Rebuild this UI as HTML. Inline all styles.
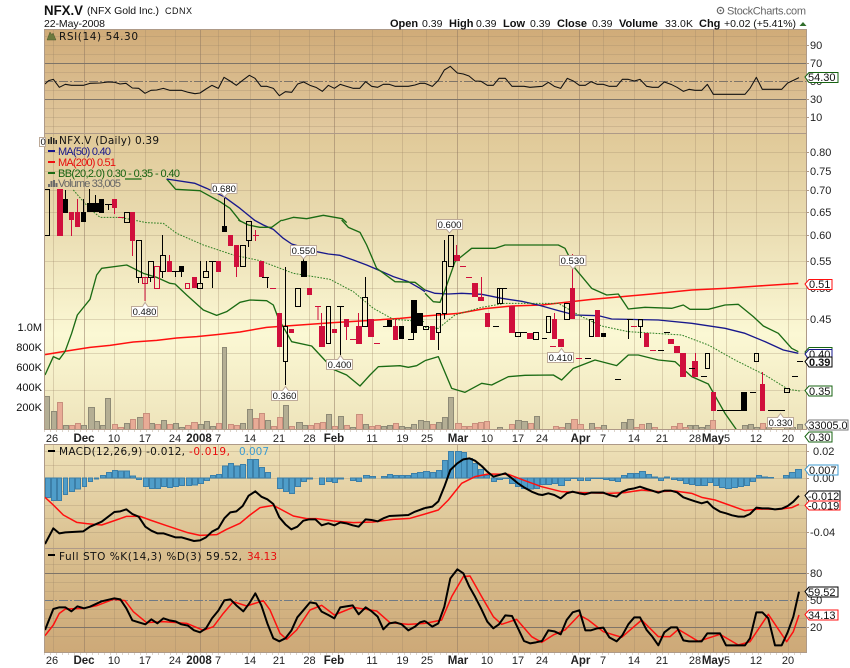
<!DOCTYPE html>
<html><head><meta charset="utf-8"><title>NFX.V</title>
<style>
html,body{margin:0;padding:0;background:#fff;width:850px;height:668px;overflow:hidden}
svg{display:block}
text{font-family:"Liberation Sans",Arial,sans-serif;font-size:11px;fill:#111}
.b{font-weight:bold}
.l{font-family:"DejaVu Sans","Liberation Sans",sans-serif;font-size:10.5px}
.m{font-family:"Liberation Sans",Arial,sans-serif;font-size:11px}
.a{font-size:11px;fill:#222}
.d{font-size:11px;text-anchor:middle;fill:#222}
.db{font-size:11.5px;font-weight:bold;text-anchor:middle;fill:#222}
.p{font-size:9.5px;text-anchor:middle;fill:#111}
.tag{fill:#fff;stroke-width:1}
.box{fill:#fff;stroke:#bdaa99}
.z{fill:none;stroke-linejoin:round}
polyline[stroke="#1b6b14"]{stroke-width:4}
polyline[stroke="#18188c"]{stroke-width:4}
polyline[stroke="#ff1010"]{stroke-width:4.5}
</style></head>
<body>
<svg width="850" height="668" viewBox="0 0 850 668" xmlns="http://www.w3.org/2000/svg">
<defs>
<linearGradient id="g1" x1="0" y1="29" x2="0" y2="133" gradientUnits="userSpaceOnUse"><stop offset="0" stop-color="#d0ab78"/><stop offset="1" stop-color="#e2caa0"/></linearGradient>
<linearGradient id="g2" x1="0" y1="133" x2="0" y2="429" gradientUnits="userSpaceOnUse"><stop offset="0" stop-color="#e0c998"/><stop offset=".3" stop-color="#e9dbb0"/><stop offset=".68" stop-color="#fbf8d4"/><stop offset="1" stop-color="#eee4bb"/></linearGradient>
<linearGradient id="g3" x1="0" y1="444" x2="0" y2="548" gradientUnits="userSpaceOnUse"><stop offset="0" stop-color="#eee1b8"/><stop offset="1" stop-color="#d9bf8f"/></linearGradient>
<linearGradient id="g4" x1="0" y1="548" x2="0" y2="652" gradientUnits="userSpaceOnUse"><stop offset="0" stop-color="#d9bf8f"/><stop offset="1" stop-color="#cda978"/></linearGradient>
<clipPath id="c1"><rect x="44" y="29" width="762" height="104"/></clipPath>
<clipPath id="c2"><rect x="44" y="134" width="762" height="295"/></clipPath>
<clipPath id="c3"><rect x="44" y="444" width="762" height="104"/></clipPath>
<clipPath id="c4"><rect x="44" y="548" width="762" height="104"/></clipPath>
</defs>

<!-- panels -->
<rect x="44" y="29" width="762" height="104" fill="url(#g1)"/>
<rect x="44" y="133" width="762" height="296" fill="url(#g2)"/>
<rect x="44" y="444" width="762" height="104" fill="url(#g3)"/>
<rect x="44" y="548" width="762" height="104" fill="url(#g4)"/>

<!-- horizontal grid -->
<path shape-rendering="crispEdges" stroke="#9a8468" stroke-opacity=".28" fill="none" d="M44 36.5H806M44 45.5H806M44 54.5H806M44 72.5H806M44 90.5H806M44 108.5H806M44 117.5H806M44 126.5H806M44 152.5H806M44 171.5H806M44 190.5H806M44 212.5H806M44 235.5H806M44 261.5H806M44 288.5H806M44 319.5H806M44 353.5H806M44 390.5H806M44 451.5H806M44 465.5H806M44 478.5H806M44 491.5H806M44 505.5H806M44 518.5H806M44 532.5H806M44 564.5H806M44 582.5H806M44 591.5H806M44 609.5H806M44 618.5H806M44 636.5H806"/>
<!-- vertical minor -->
<path shape-rendering="crispEdges" stroke="#9a8468" stroke-opacity=".3" fill="none" d="M53.5 29V133M114.5 29V133M145.5 29V133M175.5 29V133M218.5 29V133M250.5 29V133M279.5 29V133M309.5 29V133M372.5 29V133M402.5 29V133M426.5 29V133M488.5 29V133M518.5 29V133M542.5 29V133M603.5 29V133M634.5 29V133M662.5 29V133M695.5 29V133M726.5 29V133M756.5 29V133M788.5 29V133
M53.5 134V429M114.5 134V429M145.5 134V429M175.5 134V429M218.5 134V429M250.5 134V429M279.5 134V429M309.5 134V429M372.5 134V429M402.5 134V429M426.5 134V429M488.5 134V429M518.5 134V429M542.5 134V429M603.5 134V429M634.5 134V429M662.5 134V429M695.5 134V429M726.5 134V429M756.5 134V429M788.5 134V429
M53.5 444V652M114.5 444V652M145.5 444V652M175.5 444V652M218.5 444V652M250.5 444V652M279.5 444V652M309.5 444V652M372.5 444V652M402.5 444V652M426.5 444V652M488.5 444V652M518.5 444V652M542.5 444V652M603.5 444V652M634.5 444V652M662.5 444V652M695.5 444V652M726.5 444V652M756.5 444V652M788.5 444V652"/>
<!-- vertical major -->
<path shape-rendering="crispEdges" stroke="#8d7560" stroke-opacity=".5" fill="none" d="M84.5 29V429M200.5 29V429M334.5 29V429M457.5 29V429M579.5 29V429M713.5 29V429M84.5 444V652M200.5 444V652M334.5 444V652M457.5 444V652M579.5 444V652M713.5 444V652"/>

<!-- RSI -->
<g clip-path="url(#c1)">
<path shape-rendering="crispEdges" stroke="#7e7468" fill="none" d="M44 63.5H806M44 99.5H806"/>
<path shape-rendering="crispEdges" stroke="#7e7468" stroke-dasharray="9 2 2 2" fill="none" d="M44 81.5H806"/>
<g transform="scale(.33333)"><polyline class="z" stroke="#111" stroke-width="3.2" points="135,252 146,242 160,238 178,262 196,253 214,256 250,256 270,250 300,249 325,246 345,247 360,252 378,250 397,264 416,265 435,280 453,271 470,270 490,265 510,271 545,271 565,277 585,281 600,279 618,267 636,256 655,265 672,232 690,243 709,256 728,241 748,226 765,235 783,259 801,259 820,265 838,287 856,275 875,277 893,252 911,246 930,256 948,262 967,274 985,256 1003,265 1021,253 1040,259 1060,265 1079,265 1097,245 1115,259 1133,262 1150,253 1168,253 1186,259 1225,259 1245,255 1260,250 1275,250"/></g>
<g transform="translate(425 0) scale(.33333)"><polyline class="z" stroke="#111" stroke-width="3.2" points="0,250 22,259 40,241 58,210 76,199 97,219 115,222 132,228 150,243 168,244 187,256 205,256 222,235 241,235 261,259 297,259 315,262 352,259 370,247 388,259 407,265 427,235 445,243 463,256 481,256 498,245 517,253 535,253 553,259 575,259 592,238 610,238 628,243 645,238 665,259 682,262 700,262 718,246 738,253 756,262 775,274 792,268 810,271 830,271 847,253 865,283 960,283 975,265 994,232 1012,268 1070,268 1088,249 1105,241 1122,233"/></g>
</g>

<!-- main -->
<g clip-path="url(#c2)">
<!-- volume -->
<g shape-rendering="crispEdges" stroke="#8e8a76" fill="#b4ae94">
<path d="M44.5 396.5h5v33h-5zM51.5 411.5h5v18h-5zM63.5 425.5h5v4h-5zM81.5 425.5h5v4h-5zM88.5 407.5h6v22h-6zM94.5 421.5h5v8h-5zM100.5 425.5h5v4h-5zM105.5 398.5h5v31h-5zM124.5 423.5h5v6h-5zM137.5 417.5h6v12h-6zM149.5 423.5h5v6h-5zM161.5 420.5h5v9h-5zM173.5 423.5h5v6h-5zM179.5 427.5h5v2h-5zM198.5 424.5h5v5h-5zM204.5 421.5h5v8h-5zM210.5 426.5h5v3h-5zM222.5 347.5h4v82h-4zM240.5 423.5h5v6h-5zM247.5 409.5h5v20h-5zM265.5 420.5h5v9h-5zM283.5 405.5h5v24h-5zM296.5 422.5h6v7h-6zM302.5 425.5h5v4h-5zM326.5 414.5h5v15h-5zM338.5 416.5h5v13h-5zM350.5 427.5h5v2h-5zM363.5 424.5h5v5h-5zM381.5 426.5h5v3h-5zM387.5 425.5h5v4h-5zM399.5 426.5h5v3h-5zM405.5 427.5h5v2h-5zM411.5 424.5h5v5h-5zM418.5 420.5h5v9h-5zM423.5 421.5h6v8h-6zM436.5 422.5h5v7h-5zM442.5 417.5h5v12h-5zM448.5 397.5h5v32h-5zM497.5 427.5h5v2h-5zM515.5 420.5h6v9h-6zM521.5 421.5h6v8h-6zM534.5 416.5h5v13h-5zM565.5 423.5h5v6h-5zM589.5 423.5h5v6h-5zM601.5 425.5h5v4h-5zM621.5 422.5h5v7h-5zM627.5 419.5h6v10h-6zM646.5 423.5h5v6h-5zM687.5 425.5h5v4h-5zM693.5 425.5h5v4h-5zM699.5 427.5h5v2h-5zM705.5 425.5h5v4h-5zM742.5 425.5h5v4h-5zM748.5 424.5h5v5h-5zM754.5 427.5h5v2h-5zM766.5 427.5h5v2h-5zM784.5 425.5h5v4h-5zM790.5 427.5h5v2h-5zM797.5 424.5h5v5h-5z"/>
</g>
<g shape-rendering="crispEdges" stroke="#c88f7d" fill="#e8ab96">
<path d="M57.5 402.5h5v27h-5zM69.5 425.5h5v4h-5zM75.5 423.5h5v6h-5zM112.5 424.5h5v5h-5zM118.5 427.5h5v2h-5zM130.5 419.5h5v10h-5zM143.5 413.5h6v16h-6zM155.5 424.5h5v5h-5zM167.5 424.5h5v5h-5zM185.5 425.5h5v4h-5zM191.5 422.5h6v7h-6zM216.5 423.5h5v6h-5zM228.5 424.5h5v5h-5zM234.5 425.5h5v4h-5zM253.5 418.5h5v11h-5zM259.5 413.5h5v16h-5zM271.5 426.5h5v3h-5zM277.5 417.5h5v12h-5zM289.5 426.5h5v3h-5zM308.5 425.5h5v4h-5zM314.5 423.5h5v6h-5zM320.5 422.5h5v7h-5zM332.5 426.5h5v3h-5zM344.5 425.5h5v4h-5zM356.5 414.5h6v15h-6zM369.5 426.5h5v3h-5zM375.5 425.5h5v4h-5zM393.5 423.5h5v6h-5zM430.5 424.5h5v5h-5zM455.5 423.5h6v6h-6zM461.5 426.5h5v3h-5zM467.5 426.5h5v3h-5zM472.5 423.5h5v6h-5zM478.5 422.5h5v7h-5zM484.5 421.5h5v8h-5zM509.5 424.5h5v5h-5zM528.5 423.5h5v6h-5zM553.5 426.5h5v3h-5zM559.5 427.5h5v2h-5zM571.5 419.5h6v10h-6zM577.5 424.5h6v5h-6zM595.5 427.5h5v2h-5zM634.5 427.5h5v2h-5zM639.5 424.5h5v5h-5zM652.5 427.5h5v2h-5zM671.5 426.5h5v3h-5zM677.5 423.5h5v6h-5zM683.5 427.5h5v2h-5zM710.5 420.5h5v9h-5zM760.5 423.5h5v6h-5z"/>
</g>
<!-- bands & MA -->
<g transform="scale(.33333)">
<polyline class="z" stroke="#1b6b14" stroke-width="3.4" points="375,537 425,537"/>
<polyline class="z" stroke="#1b6b14" stroke-width="3.4" points="500,537 527,568 600,572 660,605 690,625 722,665"/>
<polyline class="z" stroke="#18188c" stroke-width="3.4" points="500,537 585,550 620,565 672,590 720,625 765,662"/>
<polyline class="z" stroke="#1b6b14" stroke-width="3.4" points="845,662 880,652 920,656 970,646 1027,656 1040,668"/>
<polyline class="z" stroke="#2d7f22" stroke-width="3" stroke-dasharray="5 4" points="220,570 268,625 300,652 360,652 400,660"/>
</g>
<g transform="translate(0 220) scale(.33333)">
<polyline class="z" stroke="#ff1010" stroke-width="4" points="135,404 200,393 270,382 330,376 400,366 470,361 530,354 590,350 650,344 720,336 800,322 900,315 1000,308 1100,302 1200,295 1275,288"/>
<polyline class="z" stroke="#18188c" stroke-width="3.4" points="762,0 790,15 820,28 850,55 875,72 920,85 950,95 985,102 1020,106 1060,120 1100,135 1135,150 1180,170 1225,185 1260,205 1275,215"/>
<polyline class="z" stroke="#2d7f22" stroke-width="3" stroke-dasharray="5 4" points="400,0 440,8 490,10 530,40 610,75 700,105 780,122 880,160 990,178 1060,215 1120,265 1180,298 1275,305"/>
<polyline class="z" stroke="#1b6b14" stroke-width="3.4" points="715,0 745,15 780,22 815,22 845,0"/>
<polyline class="z" stroke="#1b6b14" stroke-width="3.4" points="1025,0 1045,22 1080,37 1100,75 1130,145 1185,185 1245,187 1275,210"/>
<polyline class="z" stroke="#1b6b14" stroke-width="3.4" points="135,465 160,410 178,418 195,395 215,340 232,285 270,238 290,165 305,145 380,135 430,160 470,172 510,190 525,192 560,225 610,270 650,286 680,275 720,247 750,240 800,242 820,255 835,295 875,365 935,378 960,405 1000,448 1040,465 1080,498 1110,465 1135,440 1200,437 1225,442 1250,437 1275,422"/>
</g>
<g transform="translate(425 220) scale(.33333)">
<polyline class="z" stroke="#ff1010" stroke-width="4" points="0,288 100,280 180,266 260,258 350,255 440,245 500,238 580,231 680,222 800,210 900,205 1000,198 1120,190"/>
<polyline class="z" stroke="#18188c" stroke-width="3.4" points="0,210 30,220 70,222 110,220 170,223 230,235 290,244 340,255 400,272 450,285 520,287 560,297 700,300 800,310 900,325 960,340 1020,365 1075,390 1120,400"/>
<polyline class="z" stroke="#2d7f22" stroke-width="3" stroke-dasharray="5 4" points="0,322 40,325 90,285 170,262 240,250 400,250 470,290 530,318 610,335 770,345 850,375 930,420 1020,465 1090,508 1125,513"/>
<polyline class="z" stroke="#1b6b14" stroke-width="3.4" points="0,220 25,245 45,247 60,210 90,125 140,85 210,85 240,75 400,75 420,85 450,145 500,205 545,225 580,222 610,267 660,262 740,265 775,255 795,268 850,268 900,255 940,253 985,290 1015,318 1060,340 1100,385 1120,395"/>
<polyline class="z" stroke="#1b6b14" stroke-width="3.4" points="0,422 40,410 80,505 120,517 170,490 200,495 250,470 300,466 385,465 410,480 445,445 510,420 575,437 610,405 640,405 700,420 750,425 800,470 850,492 900,580 935,630"/>
</g>
<!-- red candles -->
<g shape-rendering="crispEdges">
<path fill="none" stroke="#d00f3c" d="M59.5 189V236M71.5 212V236M77.5 199V212M114.5 208V214M118 217.5h6M132.5 240V256M145 277V301M169.5 255V262M236.5 266V277M253 235.5h6M255.5 230V241M291 330V332M315 306.5h6M318 306.5V320M321.5 313V326M346.5 326V340M350 339.5h6M358.5 313V326M374 343.5h6M395.5 319V326M456.5 245V255M460 266.5h6M466 277.5h6M481.5 277V298M554.5 313V319M572.5 254V288M576 358.5h6M550 346.5h6M631 326.5h6M650 350.5h6M695.5 353V361M762.5 372V384M270 288.5h6"/>
<path fill="#d00f3c" d="M57 189h6v47h-6zM69 212h5v8h-5zM75 212h5v15h-5zM112 199h5v9h-5zM130 212h5v29h-5zM167 261h5v11h-5zM192 277h5v11h-5zM216 261h5v11h-5zM228 235h5v11h-5zM234 245h5v22h-5zM259 261h5v16h-5zM277 313h5v34h-5zM289 329h5v4h-5zM307 288h5v7h-5zM319 326h6v21h-6zM332 329h5v4h-5zM344 319h5v8h-5zM356 326h6v18h-6zM368 319h6v18h-6zM393 326h5v14h-5zM430 326h5v14h-5zM454 255h6v6h-6zM472 283h6v14h-6zM478 297h6v4h-6zM485 313h5v14h-5zM509 306h6v27h-6zM527 333h6v6h-6zM552 319h5v20h-5zM558 339h6v8h-6zM570 288h5v31h-5zM595 310h5v27h-5zM644 333h5v14h-5zM668 339h6v5h-6zM674 346h6v7h-6zM680 353h6v24h-6zM692 361h6v16h-6zM711 392h5v19h-5zM760 384h5v27h-5z"/>
<path fill="none" stroke="#d00f3c" d="M142.5 277.5h5v6h-5zM154.5 266.5h5v22h-5zM185.5 283.5h4v5h-4z"/>
<!-- black wicks and bodies -->
<path fill="none" stroke="#000" d="M49.5 189V236M46 189.5h3M65.5 190V199M83.5 199V212M89.5 189V203M95.5 195V204M108.5 204V210M105 204.5h7M138.5 277V283M150.5 277V282M162.5 235V255M162.5 271V278M175.5 272V277M172 271.5h7M181.5 271V277M200.5 261V283M206.5 261V272M212.5 261V288M209 261.5h7M224.5 198V226M248.5 240V247M267.5 277V288M262 277.5h7M285.5 267V327M285.5 361V385M303.5 255V261M340.5 306V355M337 306.5h7M365.5 277V297M383 326.5h6M389.5 326V320M408 339.5h6M413.5 333V340M438.5 332V350M444.5 240V261M444.5 313V319M493 326.5h6M499.5 303V288M503 288.5h4M521 332.5h6M542 338.5h5M585 358.5h6M615 379.5h6M628.5 319V339M640.5 326V338M627 319.5h6M658 350.5h6M664 332.5h6M689 368.5h6M701 376.5h6M717 410.5h24M750 392.5h6M768 410.5h17M792 376.5h6M797 361.5h6"/>
<path fill="#000" d="M63 199h5v14h-5zM81 212h5v10h-5zM87 203h6v9h-6zM93 203h6v9h-6zM99 199h5v14h-5zM179 266h5v6h-5zM222 226h5v6h-5zM301 261h6v16h-6zM387 320h5v7h-5zM399 326h5v13h-5zM411 300h6v33h-6zM417 313h6v13h-6zM601 333h5v4h-5zM741 392h6v19h-6z"/>
<!-- hollow -->
<path fill="none" stroke="#000" d="M44.5 189.5h5v46h-5zM124.5 212.5h5v10h-5zM136.5 240.5h5v37h-5zM148.5 261.5h5v16h-5zM160.5 255.5h5v16h-5zM197.5 283.5h5v5h-5zM203.5 271.5h5v6h-5zM240.5 245.5h5v21h-5zM246.5 221.5h5v19h-5zM283.5 326.5h4v35h-4zM295.5 288.5h5v18h-5zM326.5 306.5h4v37h-4zM362.5 297.5h5v29h-5zM423.5 326.5h5v3h-5zM436.5 313.5h4v19h-4zM442.5 261.5h4v52h-4zM448.5 235.5h5v31h-5zM497.5 288.5h5v15h-5zM515.5 332.5h5v4h-5zM533.5 332.5h5v7h-5zM546.5 316.5h4v16h-4zM564.5 303.5h5v16h-5zM589.5 319.5h4v17h-4zM638.5 319.5h4v7h-4zM705.5 353.5h4v15h-4zM754.5 353.5h4v8h-4zM784.5 388.5h5v4h-5z"/>
</g>
</g>

<!-- MACD -->
<g clip-path="url(#c3)">
<g shape-rendering="crispEdges" fill="#4f9dc9" stroke="#3c7fa8">
<path d="M45.5 478h5v19.5h-5zM51.5 478h5v22.5h-5zM57.5 478h4v22.5h-4zM63.5 478h4v16.5h-4zM69.5 478h5v13.5h-5zM75.5 478h5v11h-5zM82.5 478h4v8.5h-4zM88.5 478h4v3.5h-4zM94.5 478h4v1h-4zM100.5 475.5h5v2.5h-5zM106.5 472.5h5v5.5h-5zM112.5 470.5h5v7.5h-5zM118.5 471h5v7h-5zM124.5 471h5v7h-5zM130.5 476h5v2h-5zM136.5 478h5v1.5h-5zM143.5 478h5v8.5h-5zM149.5 478h5v10.5h-5zM155.5 478h5v10.5h-5zM161.5 478h5v8.5h-5zM167.5 478h5v9.5h-5zM173.5 478h5v8.5h-5zM179.5 478h5v7.5h-5zM186.5 478h5v7.5h-5zM192.5 478h5v7h-5zM198.5 478h5v5.5h-5zM204.5 478h5v2.5h-5zM210.5 475.5h5v2.5h-5zM216.5 474.5h5v3.5h-5zM222.5 466h5v12h-5zM228.5 463.5h5v14.5h-5zM234.5 466h5v12h-5zM240.5 464.5h5v13.5h-5zM247.5 459.5h5v18.5h-5zM253.5 459.5h5v18.5h-5zM259.5 467.5h5v10.5h-5zM265.5 472.5h5v5.5h-5zM277.5 478h5v10.5h-5zM283.5 478h5v13.5h-5zM289.5 478h5v15.5h-5zM295.5 478h5v8.5h-5zM301.5 478h5v3.5h-5zM307.5 478h5v1h-5zM319.5 478h5v6.5h-5zM326.5 478h5v3.5h-5zM332.5 478h5v4.5h-5zM338.5 478h5v1h-5zM350.5 478h5v2.5h-5zM356.5 478h5v3.5h-5zM363.5 475.5h6v2.5h-6zM369.5 476.5h6v1.5h-6zM381.5 476.5h5v1.5h-5zM387.5 474.5h5v3.5h-5zM393.5 475.5h5v2.5h-5zM399.5 475.5h5v2.5h-5zM405.5 475.5h5v2.5h-5zM411.5 473.5h6v4.5h-6zM417.5 472.5h6v5.5h-6zM423.5 471.5h6v6.5h-6zM430.5 472.5h5v5.5h-5zM436.5 470.5h5v7.5h-5zM442.5 460.5h5v17.5h-5zM448.5 451.5h5v26.5h-5zM455.5 451.5h6v26.5h-6zM461.5 452.5h5v25.5h-5zM467.5 458.5h5v19.5h-5zM472.5 463.5h5v14.5h-5zM478.5 469.5h5v8.5h-5zM484.5 475.5h5v2.5h-5zM491.5 478h5v3.5h-5zM497.5 478h5v1.5h-5zM503.5 478h5v.5h-5zM509.5 478h6v5.5h-6zM515.5 478h6v8.5h-6zM521.5 478h6v10.5h-6zM527.5 478h6v11h-6zM534.5 478h5v10.5h-5zM540.5 478h5v6.5h-5zM546.5 478h5v6.5h-5zM552.5 478h5v5.5h-5zM558.5 478h6v7.5h-6zM564.5 478h6v2.5h-6zM571.5 478h5v.5h-5zM577.5 478h6v2.5h-6zM585.5 478h5v2.5h-5zM591.5 478h5v.5h-5zM597.5 478h5v.5h-5zM603.5 478h5v1.5h-5zM609.5 478h5v2.5h-5zM615.5 478h5v3.5h-5zM621.5 475.5h5v2.5h-5zM627.5 473.5h6v4.5h-6zM634.5 473.5h5v4.5h-5zM639.5 471.5h6v6.5h-6zM646.5 474.5h5v3.5h-5zM652.5 477h5v1h-5zM658.5 478h5v2.5h-5zM664.5 477h5v1h-5zM671.5 478h5v1.5h-5zM677.5 478h5v2.5h-5zM683.5 478h5v5.5h-5zM689.5 478h5v6.5h-5zM695.5 478h5v7.5h-5zM701.5 478h6v7.5h-6zM707.5 478h5v4.5h-5zM713.5 478h5v7.5h-5zM719.5 478h6v9.5h-6zM725.5 478h6v10.5h-6zM731.5 478h6v9.5h-6zM738.5 478h5v8.5h-5zM744.5 478h5v7.5h-5zM750.5 478h5v3.5h-5zM756.5 475.5h5v2.5h-5zM762.5 477h5v1h-5zM768.5 477.5h5v.5h-5zM783.5 475.5h5v2.5h-5zM789.5 472.5h6v5.5h-6zM795.5 469.5h6v8.5h-6z"/>
</g>
<g transform="translate(0 440) scale(.33333)">
<polyline class="z" stroke="#ff1010" stroke-width="4" points="135,172 160,195 190,225 230,247 260,251 305,255 340,243 380,229 420,229 450,240 500,257 560,277 600,286 650,284 680,268 720,250 750,225 780,203 820,196 880,228 920,236 950,236 1000,243 1060,248 1120,246 1180,238 1230,235 1275,222"/>
<polyline class="z" stroke="#000" stroke-width="6" points="135,312 160,265 178,280 196,277 250,274 270,260 305,245 343,216 361,214 379,208 397,222 416,230 436,260 454,272 472,280 490,280 526,292 544,292 582,303 600,301 618,292 636,275 655,265 673,235 691,217 709,214 728,198 746,167 766,154 784,170 802,178 820,192 838,232 856,253 874,268 892,260 910,242 928,238 946,238 965,256 985,250 1003,256 1021,247 1039,250 1058,256 1076,260 1097,238 1115,240 1133,244 1150,235 1168,228 1205,226 1225,225 1245,215 1275,204"/>
</g>
<g transform="translate(425 440) scale(.33333)">
<polyline class="z" stroke="#ff1010" stroke-width="4" points="0,222 40,210 70,180 110,130 150,110 190,102 250,103 300,122 350,140 410,155 470,158 550,160 600,158 650,150 700,155 750,153 800,160 830,172 870,180 960,212 1000,207 1060,208 1100,203 1122,193"/>
<polyline class="z" stroke="#000" stroke-width="6" points="0,204 22,200 40,184 58,140 76,90 97,70 115,58 133,55 150,62 170,78 187,95 205,110 241,100 261,115 279,130 297,142 320,155 340,163 352,165 370,160 388,165 407,175 425,160 443,155 463,160 480,163 498,158 535,158 553,165 575,170 592,155 610,148 628,145 645,140 665,147 682,152 700,158 718,152 738,152 756,157 775,172 792,178 810,184 830,190 847,185 865,203 885,215 903,220 921,226 940,230 957,230 975,222 994,203 1012,205 1030,205 1050,208 1070,206 1088,198 1105,185 1122,167"/>
</g>
</g>

<!-- STO -->
<g clip-path="url(#c4)">
<path shape-rendering="crispEdges" stroke="#7e7468" fill="none" d="M44 573.5H806M44 627.5H806"/>
<path shape-rendering="crispEdges" stroke="#6f7a86" stroke-dasharray="9 2 2 2" fill="none" d="M44 600.5H806"/>
<g transform="translate(0 440) scale(.33333)">
<polyline class="z" stroke="#ff1010" stroke-width="4" points="135,587 160,555 178,520 196,507 250,505 290,497 340,478 375,482 400,515 440,548 490,545 560,550 610,571 640,560 670,520 700,485 740,498 790,482 810,510 840,580 860,598 890,570 930,510 965,496 1003,525 1060,502 1130,513 1170,548 1225,553 1275,550"/>
<polyline class="z" stroke="#000" stroke-width="6" points="135,570 160,507 178,502 196,502 214,514 232,499 252,505 270,500 305,484 343,475 361,478 379,505 397,541 416,547 436,553 454,538 472,550 490,535 508,541 526,544 544,553 564,557 582,571 600,577 618,565 636,535 655,512 673,481 691,478 709,496 730,514 748,490 766,460 784,496 802,550 820,595 838,604 856,595 874,572 892,532 910,511 930,487 948,490 965,515 985,525 1003,535 1021,502 1039,499 1058,496 1076,523 1097,502 1115,514 1133,530 1150,568 1168,550 1186,547 1205,553 1225,571 1245,560 1260,547 1275,543"/>
</g>
<g transform="translate(425 440) scale(.33333)">
<polyline class="z" stroke="#ff1010" stroke-width="4" points="0,550 50,540 80,470 115,410 135,408 170,470 205,530 230,553 275,538 320,590 350,607 385,585 420,570 463,525 490,540 535,575 590,592 650,540 700,590 735,590 760,568 820,604 885,583 940,615 975,605 1030,523 1085,605 1105,575 1122,525"/>
<polyline class="z" stroke="#000" stroke-width="6" points="0,543 22,560 40,550 58,500 76,415 97,388 115,400 133,440 150,470 168,505 187,545 205,565 222,553 241,526 261,528 279,565 297,603 315,610 333,607 351,603 370,571 388,574 407,583 425,540 443,517 463,511 481,571 498,571 517,565 535,563 553,592 575,604 592,586 610,553 628,532 645,532 665,570 682,590 700,616 718,577 738,562 756,562 775,601 792,604 830,604 847,580 885,580 903,616 960,616 975,595 994,517 1012,517 1030,535 1050,616 1070,616 1088,577 1105,530 1122,455"/>
</g>
</g>

<!-- panel borders -->
<g shape-rendering="crispEdges" fill="none" stroke="#ae9a88">
<path d="M44.5 29.5H806.5V429.5H44.5zM44.5 133.5H806.5M44.5 444.5H806.5V652.5H44.5zM44.5 548.5H806.5"/>
</g>
<path shape-rendering="crispEdges" stroke="#b9a896" stroke-dasharray="1 5" fill="none" d="M44 431H806M44 654H806"/>

<!-- header -->
<text x="44" y="15" class="b" style="font-size:14px" textLength="39" lengthAdjust="spacingAndGlyphs">NFX.V</text>
<text x="87" y="14" style="font-size:10.5px" textLength="72">(NFX Gold Inc.)</text>
<text x="165" y="14" style="font-size:9px" textLength="27">CDNX</text>
<text x="44" y="27" style="font-size:10.5px" textLength="61">22-May-2008</text>
<text x="390" y="27" class="b">Open</text><text x="422" y="27" style="font-size:10.5px">0.39</text>
<text x="449" y="27" class="b">High</text><text x="476" y="27" style="font-size:10.5px">0.39</text>
<text x="503" y="27" class="b">Low</text><text x="530" y="27" style="font-size:10.5px">0.39</text>
<text x="557" y="27" class="b">Close</text><text x="592" y="27" style="font-size:10.5px">0.39</text>
<text x="619" y="27" class="b">Volume</text><text x="665" y="27" style="font-size:10.5px" textLength="28">33.0K</text>
<text x="699" y="27" class="b">Chg</text><text x="724" y="27" style="font-size:10.5px" textLength="72">+0.02 (+5.41%)</text>
<polygon points="799.5,26 803,22 806.5,26" fill="#2f6d2a"/>
<circle cx="720.5" cy="10.5" r="3.2" fill="none" stroke="#666" stroke-width="1.2"/><circle cx="720.5" cy="10.5" r="1" fill="#666"/>
<text x="727" y="14.5" style="font-size:11px;fill:#666" textLength="79">StockCharts.com</text>

<!-- legends -->
<path d="M47 40l3-8 2 3 1-2 3 7z" fill="#6c7a3e" stroke="#4f5a2c" stroke-width=".5"/>
<text x="59" y="40" class="l" textLength="79">RSI(14) 54.30</text>
<path d="M48 144V139h1.500V144zM50.500 144V137h1.500V144zM53 144V138h1.500V144zM55.500 144V140h1.500V144z" fill="#222"/>
<rect x="39.500" y="137.500" width="6" height="9" fill="#fff" stroke="#bdaa99"/>
<text x="40.500" y="145" style="font-size:9.500px">0</text>
<text x="59" y="144" class="l" textLength="100">NFX.V (Daily) 0.39</text>
<rect x="48" y="150" width="7" height="2" fill="#18188c"/><text x="58" y="155" class="m" style="fill:#18188c" textLength="53">MA(50) 0.40</text>
<rect x="48" y="161" width="7" height="2" fill="#f01010"/><text x="58" y="166" class="m" style="fill:#e80c0c" textLength="58">MA(200) 0.51</text>
<rect x="48" y="172" width="7" height="2" fill="#1b6b14"/><text x="58" y="177" class="m" style="fill:#176311" textLength="122">BB(20,2.0) 0.30 - 0.35 - 0.40</text>
<path d="M48 187v-3h2v3zM50.500 187v-6h2v6zM53 187v-7h2v7zM55.500 187v-4h2v4z" fill="#6a6a6a"/><text x="58" y="187" class="m" style="fill:#666" textLength="63">Volume 33,005</text>
<rect x="48" y="450" width="7" height="2" fill="#000"/>
<text x="59" y="455" class="l" textLength="126">MACD(12,26,9) -0.012,</text>
<text x="189" y="455" class="l" style="fill:#e80c0c" textLength="41">-0.019,</text>
<text x="239" y="455" class="l" style="fill:#3d9bd0" textLength="30">0.007</text>
<rect x="48" y="554" width="7" height="2" fill="#000"/>
<text x="59" y="560" class="l" textLength="183">Full STO %K(14,3) %D(3) 59.52,</text>
<text x="247" y="560" class="l" style="fill:#e80c0c" textLength="30">34.13</text>

<!-- right axis -->
<g class="a">
<text x="810" y="49" class="a">90</text><text x="810" y="67" class="a">70</text><text x="810" y="85" class="a">50</text><text x="810" y="103" class="a">30</text><text x="810" y="121" class="a">10</text>
<text x="810" y="156" class="a">0.80</text><text x="810" y="175" class="a">0.75</text><text x="810" y="194" class="a">0.70</text><text x="810" y="216" class="a">0.65</text><text x="810" y="239" class="a">0.60</text><text x="810" y="265" class="a">0.55</text><text x="810" y="292" class="a">0.50</text><text x="810" y="323" class="a">0.45</text>
<text x="813" y="455" class="a">0.02</text><text x="813" y="482" class="a">0.00</text><text x="810" y="536" class="a">-0.04</text>
<text x="810" y="577" class="a">80</text><text x="810" y="604" class="a">50</text><text x="810" y="631" class="a">20</text>
</g>
<path shape-rendering="crispEdges" stroke="#ae9a88" fill="none" d="M806 45.500h3M806 63.500h3M806 81.500h3M806 99.500h3M806 117.500h3M806 152.500h3M806 171.500h3M806 190.500h3M806 212.500h3M806 235.500h3M806 261.500h3M806 288.500h3M806 319.500h3M806 451.500h3M806 478.500h3M806 505.500h3M806 532.500h3M806 573.500h3M806 600.500h3M806 627.500h3"/>

<!-- left axis -->
<g>
<text x="42" y="331" style="text-anchor:end">1.0M</text><text x="42" y="351" style="text-anchor:end">800K</text><text x="42" y="371" style="text-anchor:end">600K</text><text x="42" y="391" style="text-anchor:end">400K</text><text x="42" y="411" style="text-anchor:end">200K</text>
</g>

<!-- tags -->
<g>
<path class="tag" stroke="#176311" d="M805 77l4-4.500h29v10h-29z"/><text x="808" y="81">54.30</text>
<path class="tag" stroke="#ff1010" d="M805 284l4-4.500h23v10h-23z"/><text x="809" y="288">0.51</text>
<path class="tag" stroke="#176311" d="M805 352l4-4.500h23v10h-23z"/>
<path class="tag" stroke="#18188c" d="M805 354l4-4.500h23v10h-23z"/><text x="809" y="358">0.40</text>
<path class="tag" stroke="#000" d="M805 361.500l4-4.500h23v10h-23z"/><text x="809" y="366" class="b">0.39</text>
<path class="tag" stroke="#176311" d="M805 390.500l4-4.500h23v10h-23z"/><text x="809" y="395">0.35</text>
<path class="tag" stroke="#777" d="M805 424.500l4-4.500h39v10h-39z"/><text x="808.500" y="429" textLength="39" lengthAdjust="spacingAndGlyphs">33005.0</text>
<path class="tag" stroke="#176311" d="M805 436.500l4-4.500h23v10h-23z"/><text x="809" y="441">0.30</text>
<path class="tag" stroke="#3d9bd0" d="M805 469.500l4-4.500h29v10h-29z"/><text x="809" y="474">0.007</text>
<path class="tag" stroke="#000" d="M805 495.500l4-4.500h31v10h-31z"/><text x="808" y="500">-0.012</text>
<path class="tag" stroke="#ff1010" d="M805 505.500l4-4.500h31v9h-31z"/><text x="808" y="509.500">-0.019</text>
<path class="tag" stroke="#000" d="M805 591.500l4-4.500h29v10h-29z"/><text x="808" y="596">59.52</text>
<path class="tag" stroke="#ff1010" d="M805 614.500l4-4.500h29v10h-29z"/><text x="808" y="619">34.13</text>
</g>

<!-- price labels -->
<g>
<path class="box" d="M211.500 183.500h25.500v10h-9.500l-3 3.500-3-3.500h-10.500z"/><text x="224" y="192" class="p">0.680</text>
<path class="box" d="M131.500 306.500h11l2.500-4 3 4h9.500v10h-26z"/><text x="144.500" y="315" class="p">0.480</text>
<path class="box" d="M290.500 245.500h26v10h-10l-3 3.500-3-3.500h-10z"/><text x="303.500" y="254" class="p">0.550</text>
<path class="box" d="M271.500 390.500h11l3-4 3 4h9v10h-26z"/><text x="284.500" y="399" class="p">0.360</text>
<path class="box" d="M326.500 359.500h11l3-4 3 4h9v10h-26z"/><text x="339.500" y="368" class="p">0.400</text>
<path class="box" d="M436.500 219.500h26v10h-10l-3 3.500-3-3.500h-10z"/><text x="449.500" y="228" class="p">0.600</text>
<path class="box" d="M559.500 255.500h26.500v10h-10l-3 3.500-3-3.500h-10.500z"/><text x="572.500" y="264" class="p">0.530</text>
<path class="box" d="M547.500 352.500h11l3-4 3 4h9v10h-26z"/><text x="560.500" y="361" class="p">0.410</text>
<path class="box" d="M767.500 417.500h10l3-4 3 4h10v10h-26z"/><text x="780.500" y="426" class="p">0.330</text>
</g>

<!-- date axes -->
<g>
<text x="52" y="442" class="d">26</text><text x="84" y="442" class="db">Dec</text><text x="114" y="442" class="d">10</text><text x="145" y="442" class="d">17</text><text x="175" y="442" class="d">24</text><text x="199" y="442" class="db">2008</text><text x="218" y="442" class="d">7</text><text x="250" y="442" class="d">14</text><text x="279" y="442" class="d">21</text><text x="309.500" y="442" class="d">28</text><text x="334" y="442" class="db">Feb</text><text x="372" y="442" class="d">11</text><text x="402.500" y="442" class="d">19</text><text x="427" y="442" class="d">25</text><text x="458" y="442" class="db">Mar</text><text x="487" y="442" class="d">10</text><text x="518" y="442" class="d">17</text><text x="542" y="442" class="d">24</text><text x="580.500" y="442" class="db">Apr</text><text x="603" y="442" class="d">7</text><text x="634" y="442" class="d">14</text><text x="662" y="442" class="d">21</text><text x="695" y="442" class="d">28</text><text x="713" y="442" class="db">May</text><text x="727" y="442" class="d">5</text><text x="756" y="442" class="d">12</text><text x="788" y="442" class="d">20</text>
<text x="52" y="664" class="d">26</text><text x="84" y="664" class="db">Dec</text><text x="114" y="664" class="d">10</text><text x="145" y="664" class="d">17</text><text x="175" y="664" class="d">24</text><text x="199" y="664" class="db">2008</text><text x="218" y="664" class="d">7</text><text x="250" y="664" class="d">14</text><text x="279" y="664" class="d">21</text><text x="309.500" y="664" class="d">28</text><text x="334" y="664" class="db">Feb</text><text x="372" y="664" class="d">11</text><text x="402.500" y="664" class="d">19</text><text x="427" y="664" class="d">25</text><text x="458" y="664" class="db">Mar</text><text x="487" y="664" class="d">10</text><text x="518" y="664" class="d">17</text><text x="542" y="664" class="d">24</text><text x="580.500" y="664" class="db">Apr</text><text x="603" y="664" class="d">7</text><text x="634" y="664" class="d">14</text><text x="662" y="664" class="d">21</text><text x="695" y="664" class="d">28</text><text x="713" y="664" class="db">May</text><text x="727" y="664" class="d">5</text><text x="756" y="664" class="d">12</text><text x="788" y="664" class="d">20</text>
</g>
</svg>
</body></html>
